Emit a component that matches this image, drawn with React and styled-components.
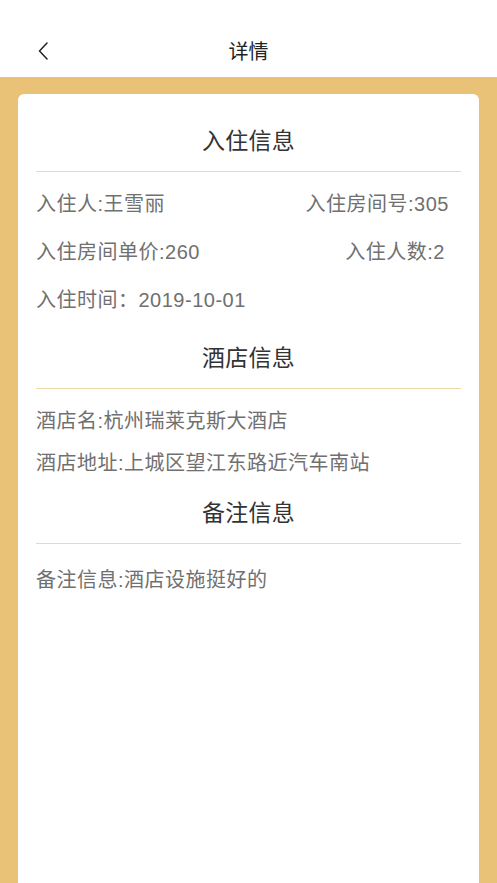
import React from 'react';
import styled, { createGlobalStyle } from 'styled-components';

const GlobalStyle = createGlobalStyle`
  html, body {
    margin: 0;
    padding: 0;
    background: #ffffff;
  }
  body {
    font-family: "Liberation Sans", "Noto Sans CJK SC", sans-serif;
  }
`;

const Page = styled.div`
  display: flex;
  flex-direction: column;
  min-height: 100vh;
`;

const Header = styled.header`
  padding-top: 24px;
  background: #ffffff;
`;

const NavBar = styled.div`
  position: relative;
  height: 53px;
  display: flex;
  align-items: center;
  justify-content: center;
`;

const BackButton = styled.button`
  position: absolute;
  left: 34px;
  top: 50%;
  transform: translateY(-50%);
  width: 18px;
  height: 24px;
  padding: 0;
  border: 0;
  background: none;
  display: flex;
  align-items: center;
  justify-content: center;
`;

const NavTitle = styled.h1`
  margin: 0;
  font-size: 20px;
  font-weight: 400;
  color: #222;
`;

const Backdrop = styled.main`
  flex: 1;
  display: flex;
  background: #e9c277;
  padding: 17px 18px 0;
`;

const Card = styled.section`
  flex: 1;
  background: #ffffff;
  border-radius: 6px 6px 0 0;
  padding: 0 18px 40px;
`;

const SectionTitle = styled.h2`
  margin: ${(p) => p.$top}px 0 0;
  font-size: 23px;
  font-weight: 400;
  line-height: 40px;
  letter-spacing: 0.3px;
  text-align: center;
  color: #333;
`;

const Divider = styled.hr`
  margin: 10px 0 0;
  border: 0;
  border-top: 1px solid #eddaa8;
`;

const Rows = styled.div`
  padding-top: ${(p) => p.$top}px;
`;

const Row = styled.div`
  display: flex;
  justify-content: space-between;
  align-items: center;
  height: ${(p) => p.$h}px;
  font-size: 20px;
  letter-spacing: 0.5px;
  color: #707070;
`;

const Value = styled.span`
  margin-right: ${(p) => p.$inset || 0}px;
  white-space: nowrap;
`;

const ChevronLeft = () => (
  <svg width="10" height="18" viewBox="0 0 10 18" fill="none">
    <path d="M9 1L1.5 9L9 17" stroke="#222" strokeWidth="1.5" strokeLinecap="round" strokeLinejoin="round" />
  </svg>
);

export default function App() {
  return (
    <>
      <GlobalStyle />
      <Page>
        <Header>
          <NavBar>
            <BackButton aria-label="返回">
              <ChevronLeft />
            </BackButton>
            <NavTitle>详情</NavTitle>
          </NavBar>
        </Header>
        <Backdrop>
          <Card>
            <SectionTitle $top={27}>入住信息</SectionTitle>
            <Divider />
            <Rows $top={6}>
              <Row $h={48}>
                <Value>入住人:王雪丽</Value>
                <Value $inset={12}>入住房间号:305</Value>
              </Row>
              <Row $h={48}>
                <Value>入住房间单价:260</Value>
                <Value $inset={16}>入住人数:2</Value>
              </Row>
              <Row $h={48}>
                <Value>入住时间：2019-10-01</Value>
              </Row>
            </Rows>

            <SectionTitle $top={16}>酒店信息</SectionTitle>
            <Divider />
            <Rows $top={9}>
              <Row $h={42}>
                <Value>酒店名:杭州瑞莱克斯大酒店</Value>
              </Row>
              <Row $h={42}>
                <Value>酒店地址:上城区望江东路近汽车南站</Value>
              </Row>
            </Rows>

            <SectionTitle $top={11}>备注信息</SectionTitle>
            <Divider />
            <Rows $top={13}>
              <Row $h={42}>
                <Value>备注信息:酒店设施挺好的</Value>
              </Row>
            </Rows>
          </Card>
        </Backdrop>
      </Page>
    </>
  );
}
